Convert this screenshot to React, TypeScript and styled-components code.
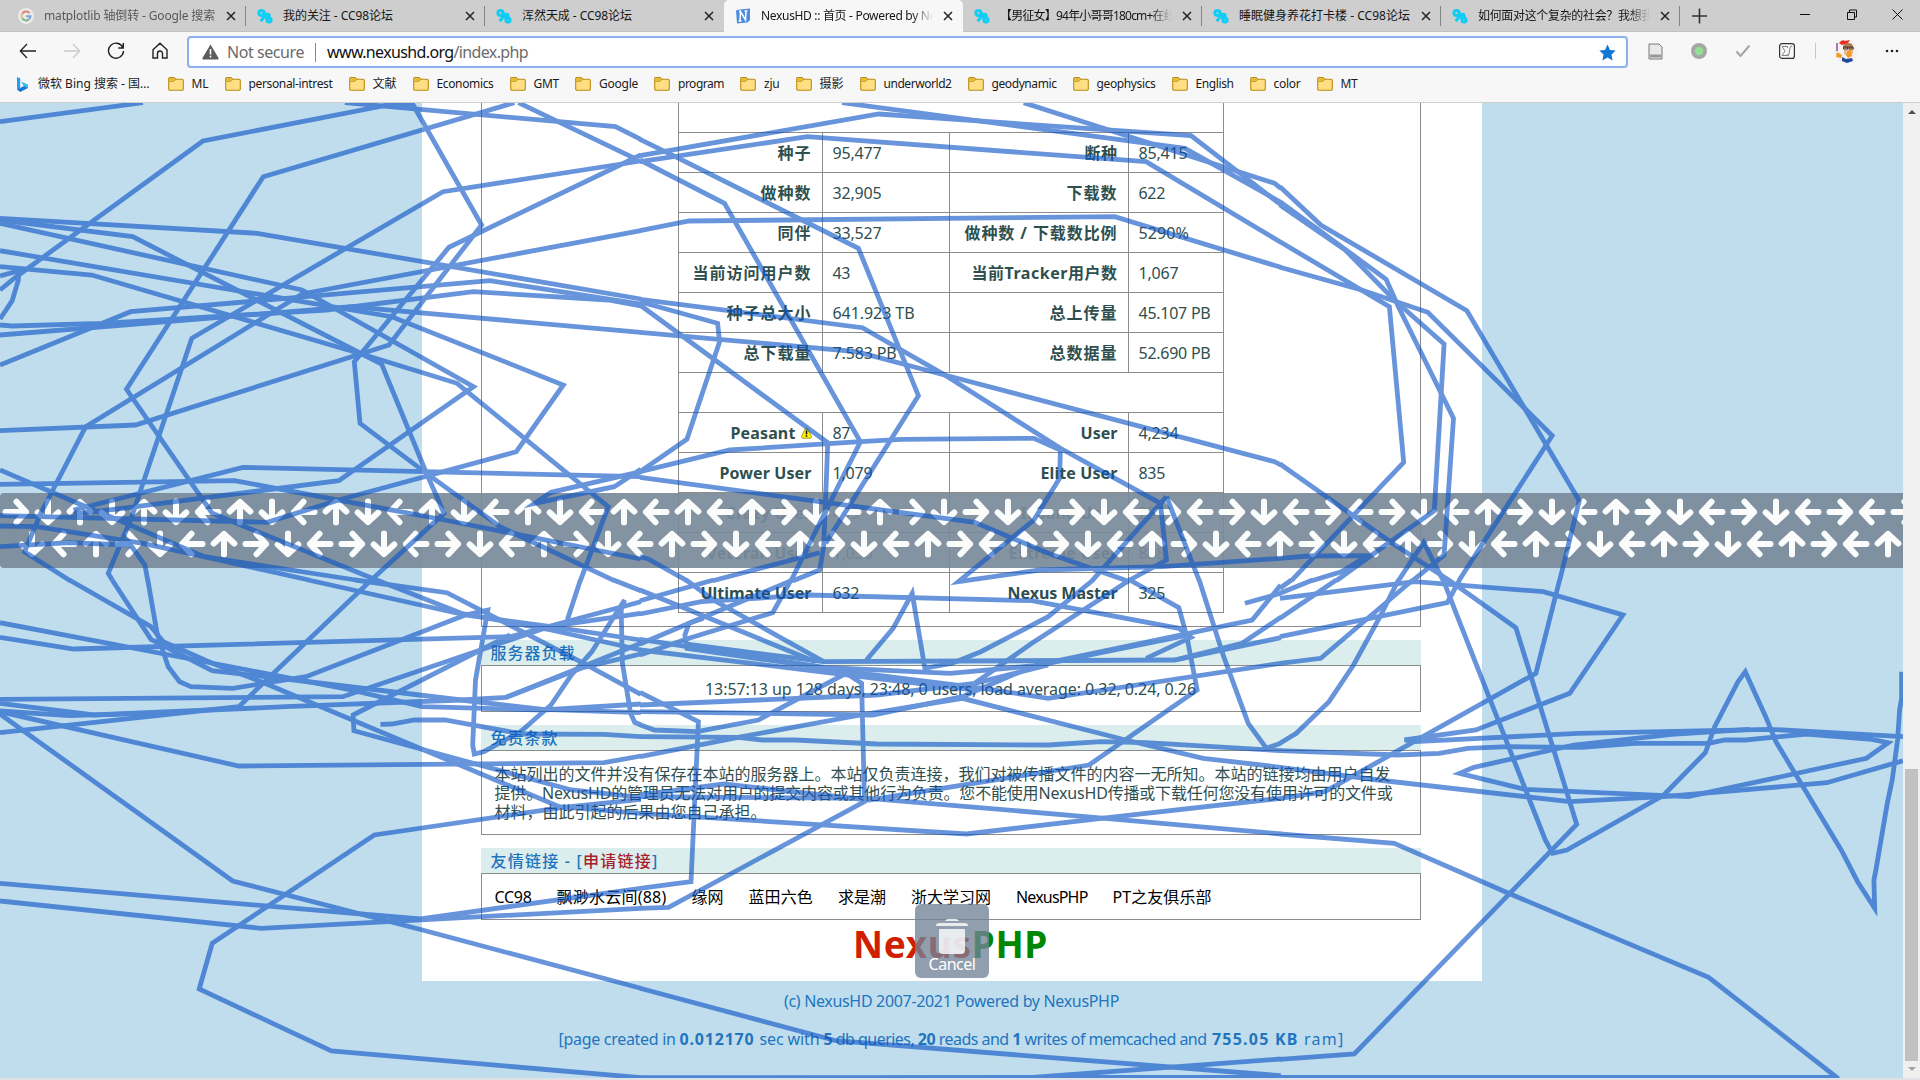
import React, { useLayoutEffect, useRef, useState } from "react";
import styled, { createGlobalStyle } from "styled-components";

const GlobalStyle = createGlobalStyle`
  * { box-sizing: border-box; }
  body { margin: 0; overflow: hidden; font-family: "Noto Sans", "Noto Sans CJK SC", sans-serif; }
`;

/* ---------- text that keeps a set width ---------- */

const Line = styled.span`
  display: inline-block;
  white-space: pre;
`;

function Fit({ w, children }: { w: number; children: React.ReactNode }) {
  const ref = useRef<HTMLSpanElement>(null);
  const [spacing, setSpacing] = useState(0);
  useLayoutEffect(() => {
    const el = ref.current;
    if (!el) return;
    const chars = (el.textContent || "").length || 1;
    setSpacing((w - el.getBoundingClientRect().width) / chars);
  }, [w]);
  return (
    <Line ref={ref} style={{ letterSpacing: `${spacing}px` }}>
      {children}
    </Line>
  );
}

/* ---------- browser chrome ---------- */

const Window = styled.div`
  position: relative;
  width: 1920px;
  height: 1080px;
  display: flex;
  flex-direction: column;
  overflow: hidden;
  background: #dfe3e7;
`;

const TabStrip = styled.div`
  height: 32px;
  flex: none;
  display: flex;
  padding-left: 7px;
  background: #cecece;
  box-shadow: inset 0 -1px 0 #c2c2c2;
`;

const Tab = styled.div<{ $active?: boolean; $line?: boolean }>`
  width: 239px;
  flex: none;
  display: flex;
  align-items: center;
  padding: 0 10px 0 11px;
  border-radius: 5px 5px 0 0;
  background: ${(p) => (p.$active ? "#f7f7f7" : "transparent")};
  background-image: ${(p) => (p.$line ? "linear-gradient(#858585, #858585)" : "none")};
  background-size: 1px 20px;
  background-position: right 6px;
  background-repeat: no-repeat;
  font-size: 12px;
  color: #151515;
`;

const TabTitle = styled.div<{ $fade?: boolean; $dim?: boolean }>`
  flex: 1;
  height: 20px;
  line-height: 20px;
  margin: 0 10px 0 10px;
  overflow: hidden;
  opacity: ${(p) => (p.$dim ? 0.65 : 1)};
  mask-image: ${(p) => (p.$fade ? "linear-gradient(90deg, #000 88%, transparent)" : "none")};
`;

const Controls = styled.div`
  flex: 1;
  display: flex;
  align-items: center;
  svg { flex: none; }
`;

const ToolRow = styled.div`
  height: 37px;
  flex: none;
  display: flex;
  align-items: center;
  padding-top: 1px;
  background: #f7f7f7;
`;

const ToolButton = styled.div<{ $w?: number }>`
  width: ${(p) => p.$w || 44}px;
  display: flex;
  justify-content: center;
  flex: none;
`;

const Address = styled.div`
  width: 1441px;
  height: 32px;
  flex: none;
  display: flex;
  align-items: center;
  margin: 2px 5px 0 0;
  padding: 0 10px 0 13px;
  border: 2px solid #8cb0ec;
  border-radius: 4px;
  background: #fff;
  font-size: 16px;
  line-height: 22px;
  color: #6b6b6b;
  b { font-weight: 400; color: #111; }
`;

const Rule = styled.i<{ $h: number; $c: string }>`
  width: 1px;
  height: ${(p) => p.$h}px;
  background: ${(p) => p.$c};
`;

const Security = styled.div`
  display: flex;
  align-items: center;
  gap: 11px;
  flex: 1;
  margin-left: 8px;
`;

const Bookmarks = styled.div`
  height: 34px;
  flex: none;
  display: flex;
  align-items: center;
  gap: 16px;
  padding: 0 0 4px 17px;
  border-bottom: 1px solid #cfcfcf;
  background: #f7f7f7;
  font-size: 12px;
  color: #1b1b1b;
`;

const Bookmark = styled.div<{ $gap?: number; $after?: number }>`
  display: flex;
  align-items: center;
  gap: ${(p) => p.$gap || 8}px;
  margin-right: ${(p) => p.$after || 0}px;
  line-height: 20px;
`;

/* ---------- web page ---------- */

const Viewport = styled.div`
  height: 975px;
  flex: none;
  display: flex;
`;

const Page = styled.div`
  width: 1903px;
  display: flex;
  flex-direction: column;
  align-items: center;
  background: #c0ddee;
  font-size: 16px;
  line-height: 20px;
  color: #2f4f4f;
`;

const Panel = styled.div`
  width: 1060px;
  height: 878px;
  flex: none;
  display: flex;
  flex-direction: column;
  padding: 0 61px 0 59px;
  background: #fff;
`;

const StatsBox = styled.div`
  border: 1px solid #8c8c8c;
  border-top: 0;
  padding: 0 0 13px 196px;
`;

const Stats = styled.div`
  width: 546px;
  border: 1px solid #8c8c8c;
  border-top: 0;
`;

const StatRow = styled.div<{ $h?: number; $top?: boolean }>`
  display: grid;
  grid-template-columns: 143px 127px 179px 95px;
  height: ${(p) => p.$h || 40}px;
  border-top: ${(p) => (p.$top === false ? "0" : "1px solid #8c8c8c")};
`;

const Label = styled.div<{ $left?: boolean }>`
  display: flex;
  align-items: center;
  justify-content: flex-end;
  gap: 5px;
  padding-right: 10px;
  border-left: ${(p) => (p.$left ? "1px solid #8c8c8c" : "0")};
  font-weight: 700;
`;

const Value = styled.div`
  display: flex;
  align-items: center;
  padding-left: 10px;
  border-left: 1px solid #8c8c8c;
`;

const Heading = styled.div`
  height: 25px;
  flex: none;
  margin-top: 13px;
  padding: 3px 0 0 10px;
  background: #dbedec;
  color: #1f74bd;
  font-weight: 500;
`;

const Box = styled.div<{ $h: number; $center?: boolean }>`
  height: ${(p) => p.$h}px;
  flex: none;
  border: 1px solid #8c8c8c;
  padding: 14px 13px 0;
  line-height: 19px;
  text-align: ${(p) => (p.$center ? "center" : "left")};
`;

const Links = styled.div`
  display: flex;
  gap: 25px;
  color: #000;
`;

const Red = styled.span`
  color: #a8202c;
`;

const Logo = styled.div`
  display: flex;
  justify-content: center;
  margin-top: -1px;
  line-height: 50px;
  font-size: 37px;
  font-weight: 700;
  color: #d01f00;
  span span { color: #008700; }
`;

const Footer = styled.div`
  display: flex;
  flex-direction: column;
  align-items: center;
  gap: 18px;
  padding-top: 10px;
  color: #2275bd;
`;

const ScrollBar = styled.div`
  width: 17px;
  display: flex;
  flex-direction: column;
  align-items: center;
  padding: 7px 0;
  background: #f0f0f0;
`;

const Thumb = styled.div`
  width: 13px;
  height: 292px;
  margin: auto 0 6px;
  background: #c1c1c1;
`;

const Arrowhead = styled.i<{ $down?: boolean }>`
  border: 4px solid transparent;
  ${(p) => (p.$down ? "border-top-color: #a3a3a3; border-bottom: 0;" : "border-bottom-color: #505050; border-top: 0;")}
`;

/* ---------- gesture overlay ---------- */

const Band = styled.div`
  position: absolute;
  left: 0;
  top: 493px;
  width: 1903px;
  height: 75px;
  overflow: hidden;
  border-radius: 4px 0 0 4px;
  padding-top: 3px;
  background: rgba(121, 138, 154, 0.92);
`;

const ArrowRow = styled.div<{ $indent: number }>`
  display: flex;
  width: 1980px;
  height: 32px;
  padding-left: ${(p) => p.$indent}px;
  svg { flex: none; }
`;

const Cancel = styled.div`
  position: absolute;
  left: 915px;
  top: 904px;
  width: 74px;
  height: 74px;
  display: flex;
  flex-direction: column;
  align-items: center;
  padding-top: 14px;
  border-radius: 6px;
  background: rgba(114, 131, 150, 0.78);
  color: #fff;
  font-size: 16px;
  line-height: 20px;
`;

const Trail = styled.svg`
  position: absolute;
  left: 0;
  top: 103px;
`;

/* ---------- icons ---------- */

const CloseX = () => (
  <svg width="10" height="10" viewBox="0 0 10 10" stroke="#222" strokeWidth="1.5">
    <path d="M1 1l8 8M9 1L1 9" />
  </svg>
);

const Folder = () => (
  <svg width="16" height="14" viewBox="0 0 16 14">
    <path d="M.7 2Q.7.6 2 .6H6l1.7 1.6H14q1.3 0 1.3 1.3V12q0 1.3-1.3 1.3H2Q.7 13.3.7 12z" fill="#ffdf82" stroke="#b98b12" strokeWidth="1.1" />
    <path d="M1.2 4.2H6L7.700 2.5" fill="none" stroke="#b98b12" />
    <path d="M1.5 1.5h4.300l1 1-1 1.2H1.5z" fill="#e6b62b" />
  </svg>
);

const Cc98 = () => (
  <svg width="16" height="16" viewBox="0 0 16 16" fill="none" stroke="#10cdf5" strokeWidth="3">
    <circle cx="4.5" cy="5" r="2.6" />
    <path d="M7 4Q8 10 3.500 13" />
    <circle cx="10.500" cy="8" r="1.7" />
    <circle cx="12" cy="12" r="2.1" />
  </svg>
);

const GoogleG = () => (
  <svg width="16" height="16" viewBox="0 0 16 16" fill="none" strokeWidth="2" opacity="0.75">
    <circle cx="8" cy="8" r="8" fill="#f4f4f4" />
    <path d="M11.5 5A4.5 4.5 0 0 0 4.2 5.7" stroke="#e5695f" />
    <path d="M4.2 5.7A4.5 4.5 0 0 0 4.2 10.3" stroke="#eec04a" />
    <path d="M4.2 10.3A4.5 4.5 0 0 0 11 11.3" stroke="#62ae76" />
    <path d="M11 11.3A4.5 4.5 0 0 0 12.5 8.2H8.2" stroke="#6394df" />
  </svg>
);

const NexusN = () => (
  <svg width="16" height="16" viewBox="0 0 16 16">
    <path d="M1 2.500L4.500 1.500 15 .5V12L12.500 14.500 2 15.500z" fill="#4b8be0" />
    <path d="M5 13L5.500 3.500 10.500 12 11 3M3.500 13h3M4 3.500h2M9.500 3h3" stroke="#fff" strokeWidth="1.5" fill="none" />
  </svg>
);

const Warning = () => (
  <svg width="11" height="12" viewBox="0 0 11 12">
    <path d="M4.300 1.500Q5.500 0 6.700 1.500L10.500 9.500Q10.500 11.300 9 11.300H2Q.5 11.300.5 9.500z" fill="#ffee00" stroke="#96911c" strokeWidth=".8" />
    <path d="M5.500 3.500v3.800M5.500 8.300v1.500" stroke="#000" strokeWidth="1.500" />
  </svg>
);

const directions: Record<string, number> = { r: 0, d: 90, l: 180, u: 270 };

const Arrow = ({ dir }: { dir: string }) => (
  <svg width="32" height="32" viewBox="0 0 32 32" fill="none" stroke="#fff" strokeOpacity="0.97" strokeWidth="6" strokeLinecap="round" strokeLinejoin="round">
    <path d="M5.5 16H26M16.5 5.7L26 16L16.5 26.3" transform={`rotate(${directions[dir]} 16 16)`} />
  </svg>
);

/* ---------- data ---------- */

const tabs = [
  { icon: <GoogleG />, title: "matplotlib 轴倒转 - Google 搜索", w: 171, dim: true, line: true },
  { icon: <Cc98 />, title: "我的关注 - CC98论坛", w: 110, line: true },
  { icon: <Cc98 />, title: "浑然天成 - CC98论坛", w: 110 },
  { icon: <NexusN />, title: "NexusHD :: 首页 - Powered by Ne", w: 175, fade: true, active: true },
  { icon: <Cc98 />, title: "【男征女】94年小哥哥180cm+在线", w: 175, fade: true, line: true },
  { icon: <Cc98 />, title: "睡眠健身养花打卡楼 - CC98论坛", w: 171, line: true },
  { icon: <Cc98 />, title: "如何面对这个复杂的社会？我想我", w: 175, fade: true, line: true },
];

const bookmarks: [string, number][] = [
  ["ML", 17], ["personal-intrest", 84], ["文献", 24], ["Economics", 57], ["GMT", 25.5], ["Google", 39],
  ["program", 46], ["zju", 15.5], ["摄影", 24], ["underworld2", 68], ["geodynamic", 65], ["geophysics", 59],
  ["English", 38], ["color", 27], ["MT", 17],
];

type Stat = [string, number, string, number, string, number, string, number];

const torrentStats: Stat[] = [
  ["种子", 34, "95,477", 49, "断种", 33, "85,415", 49],
  ["做种数", 51, "32,905", 49, "下载数", 51, "622", 26.5],
  ["同伴", 34, "33,527", 49, "做种数 / 下载数比例", 153, "5290%", 50.5],
  ["当前访问用户数", 119, "43", 17.5, "当前Tracker用户数", 146, "1,067", 40],
  ["种子总大小", 85, "641.923 TB", 82, "总上传量", 68, "45.107 PB", 72],
  ["总下载量", 68, "7.583 PB", 64, "总数据量", 68, "52.690 PB", 72],
];

const classStats: Stat[] = [
  ["Peasant", 65, "87", 17.5, "User", 37, "4,234", 40],
  ["Power User", 92, "1,079", 40, "Elite User", 77, "835", 26.5],
  ["Crazy User", 86, "499", 26.5, "Insane User", 97, "258", 26.5],
  ["Veteran User", 105, "1,036", 40, "Extreme User", 109, "838", 26.5],
  ["Ultimate User", 111, "632", 26.5, "Nexus Master", 110, "325", 26.5],
];

const links: [string, number][] = [
  ["CC98", 37], ["飘渺水云间(88)", 110], ["缘网", 32], ["蓝田六色", 64.5], ["求是潮", 48],
  ["浙大学习网", 80], ["NexusPHP", 71.5], ["PT之友俱乐部", 99],
];

const topArrows = "rdududludludludludlu" + "lulurdlurdrdlrdlrlrd" + "lrlrdlurdlurdlrdlrlr";
const bottomArrows = "dlurdlurdlrdlrdlurdl" + "urdlurdlurlurdlurdlu" + "rdlurdlurdlurdlurlu";

/* Sampled pointer positions; every sector has its own origin on the screen. */
const sectors = [
  {
    x: 0, y: 90, paths: [
      "0,95 350,38",
      "0,600 40,560 497,153 950,45 1010,40 1180,405 953,765 332,1005 0,1022",
      "1260,38 645,260 310,898 520,1270 918,1468",
      "1270,38 1555,205",
      "845,38 1508,110 1570,148",
      "1570,213 1085,305 470,745 320,1290 265,1450 275,1470",
      "1570,195 1100,472 868,815 882,1000 1045,1150 1225,1310 1505,1472",
      "0,385 630,430 1570,627",
      "0,390 325,440 935,822 1045,1150 1088,1270 905,1475",
      "0,400 740,600 1160,890 830,1172 300,1255 180,1272",
      "0,482 960,680 1380,885 1265,1085 830,1230 655,1297 0,1277",
      "0,530 225,555 880,790 1120,880 1490,1250 1422,1472",
      "0,558 45,543 45,570 30,632 0,687",
      "0,705 30,708 250,700 800,660 1160,605 1490,630 1570,648",
      "0,735 560,680 860,650 1570,727",
      "0,825 230,710 320,665 750,620 1200,572 1570,642",
      "1570,422 740,612 210,1010 100,1270 60,1385 172,1472",
      "0,1140 190,1240 300,1295 500,1400 872,1470",
      "0,1183 575,1172 1090,1290 1570,1407",
      "180,1260 595,1132 1570,1160",
      "0,1308 90,1310 350,1360 500,1400 757,1470",
      "0,1370 170,1358 320,1365 355,1425 362,1472",
      "1570,1138 1505,1190 1310,1240 1350,1207 1570,1145",
    ],
  },
  {
    x: 640, y: 90, paths: [
      "0,197 585,72 1350,137 1570,344",
      "0,215 410,140 1240,215 1570,457",
      "0,210 207,340 540,1055 370,1472",
      "0,148 95,205 535,475 682,917 455,1360",
      "495,38 1335,175 1570,337",
      "940,38 1200,140 1555,280 1570,295",
      "0,422 120,393 1163,380 1570,532",
      "0,628 545,713 740,850 1030,1075 1275,1240 1290,1410 1200,1470",
      "0,727 530,785 730,850 1555,1115 1570,1125",
      "0,635 190,700 195,755 115,1048 0,1145",
      "0,645 460,1058 450,1370 440,1440 375,1472",
      "0,1145 220,1080 540,1055 640,1048 965,1045 1030,1080 1028,1165 965,1290 780,1475 980,1440 1280,1430 1570,1405",
      "0,1162 440,1235 820,1297 1000,1390 1200,1475",
      "1290,1220 1108,1472",
      "1290,1220 1370,1472",
      "0,1400 20,1407 115,1472",
      "178,1472 440,1388",
    ],
  },
  {
    x: 1280, y: 90, paths: [
      "0,290 100,405 458,662 733,1232 685,1472",
      "0,335 260,568 290,650 425,985 402,1395 325,1472",
      "0,345 160,480 280,630 402,762 378,1262 270,1355 138,1472",
      "0,455 268,650 303,1117 28,1472",
      "0,532 200,600 362,667 667,1037 438,1472",
      "0,1122 270,1355 425,1480",
      "0,1405 70,1398 215,1397 150,1445 78,1472",
      "290,1472 352,1357 400,1472",
    ],
  },
  {
    x: 0, y: 580, paths: [
      "0,128 480,240 860,330 1035,380 1330,390 1570,372",
      "0,172 180,207 1250,170 1570,65",
      "170,0 370,140 400,185 520,250 640,305 1370,680 1570,700",
      "275,0 370,178 520,272 720,300 1150,363 1330,388 1570,398",
      "362,0 385,160 412,260 440,305 468,320 570,325 750,290 1140,105 1195,90 1165,300 1158,495 1162,522 1185,515 1275,455 1350,375 1400,285 1450,215 1530,60 1522,90 1525,250 1545,400 1555,427 1572,436",
      "905,5 640,315 585,380 0,458",
      "0,358 840,350 1345,140 1570,100",
      "0,370 230,405 700,380 1130,360 1240,352 1570,190",
      "0,393 170,407 420,398",
      "0,395 585,558 1480,548 1570,528",
      "0,402 570,903 1035,1050 1570,1225",
      "0,910 1030,1017 1570,925",
      "0,963 640,1045 1570,985",
      "1570,658 1380,682 917,765 520,1090 488,1227 812,1413 1570,1493",
      "932,433 960,432 1015,420 1090,420 1280,462 1480,463 1570,470",
      "755,0 1140,105 1350,140 1570,180",
      "870,0 1095,38 1430,250 1570,343",
      "918,-2 1130,100 1350,150 1570,210",
      "1422,0 1390,120",
      "1250,165 865,405 867,452 1130,540 1400,630 1570,652",
      "1503,0 1570,32",
      "1570,222 1430,262 1240,352",
    ],
  },
  {
    x: 640, y: 580, paths: [
      "0,30 110,85 430,245",
      "113,0 180,60 450,245 1310,240 1570,173",
      "0,102 150,65 410,45 960,62 1320,145 1350,172 1240,235",
      "820,310 580,345 0,375",
      "0,62 180,0",
      "0,192 155,112 375,0",
      "0,225 120,175 325,98 370,0",
      "555,240 620,145 667,40 698,265 765,250 835,215 1000,110 1110,0",
      "820,310 960,190 1200,0 1320,83 1340,170 1365,330 1100,555 560,660 205,612 0,645",
      "155,115 120,130 110,165 115,205 510,275 840,325 1000,355 1570,250",
      "0,178 450,262 760,280 960,258 1500,120 1570,15",
      "0,210 510,285 820,330",
      "110,192 450,245",
      "0,395 570,405 790,350 960,260 1345,165",
      "820,310 1000,255",
      "0,530 250,470 540,405 790,355 1190,480 1380,535 1570,562",
      "0,337 143,425 125,905 0,925",
      "0,985 70,982 550,665 543,310 505,280 290,420 140,455 35,450 0,434",
      "0,470 240,472 300,480 380,480 580,492 1000,495 1130,485 1240,488 1570,512",
      "0,650 560,655 1140,715 1570,762",
      "0,700 800,762 1130,715 1570,655",
      "0,1225 480,1382 1570,1487",
      "1370,0 1430,230 1490,430 1535,505 1570,490",
      "1482,70 1570,40",
      "1570,112 1475,190 1310,240",
      "1570,1437 1260,1465 945,1494",
      "0,1493 1570,1492",
    ],
  },
  {
    x: 1280, y: 580, paths: [
      "0,55 330,5 645,35 840,105 710,340 480,450 305,480 330,485 730,460 1200,448 1526,470",
      "0,25 28,0",
      "0,40 80,0",
      "0,170 410,68 440,0",
      "0,250 100,235 325,0",
      "0,115 138,0",
      "0,490 40,460 120,365 180,255 245,110 290,0",
      "400,0 430,95 650,780 668,820 703,810 940,645 1042,518 1065,440 1122,305 1140,275 1160,330 1190,410 1215,485 1375,810 1415,905 1457,985 1455,900 1460,870 1478,740 1488,670 1500,600 1513,480 1518,390 1523,355 1523,275",
      "0,512 290,525 390,520 460,505 560,500 740,502 870,490 1050,490 1090,480 1140,480 1290,462 1450,478 1490,488 1437,535 1000,650 600,628 440,580 475,562 720,495 960,463 1150,448",
      "0,562 240,600 710,665 940,650 1340,608 1526,542",
      "0,655 110,635 350,470 627,280 685,0",
      "0,762 280,790 560,940 1050,1192 1368,1496",
      "0,1438 182,1422 727,733 578,143 425,10",
      "0,1492 1360,1492",
    ],
  },
];

const toScreen = (path: string, x: number, y: number) =>
  path
    .split(" ")
    .map((pair) => {
      const [px, py] = pair.split(",").map(Number);
      return `${(x + px / 2.45).toFixed(1)},${(y + py / 3).toFixed(1)}`;
    })
    .join(" ");

/* ---------- parts ---------- */

const StatLine = ({ stat }: { stat: Stat }) => (
  <StatRow>
    <Label>
      <Fit w={stat[1]}>{stat[0]}</Fit>
      {stat[0] === "Peasant" && <Warning />}
    </Label>
    <Value><Fit w={stat[3]}>{stat[2]}</Fit></Value>
    <Label $left><Fit w={stat[5]}>{stat[4]}</Fit></Label>
    <Value><Fit w={stat[7]}>{stat[6]}</Fit></Value>
  </StatRow>
);

const Chrome = () => (
  <>
    <TabStrip>
      {tabs.map((t) => (
        <Tab key={t.title} $active={t.active} $line={t.line}>
          {t.icon}
          <TabTitle $fade={t.fade} $dim={t.dim}><Fit w={t.w}>{t.title}</Fit></TabTitle>
          <CloseX />
        </Tab>
      ))}
      <Controls>
        <svg width="239" height="32" viewBox="0 0 239 32" fill="none" stroke="#111">
          <path d="M12 16h15M19.5 8.5v15" strokeWidth="1.6" stroke="#333" />
          <path d="M120 14.5h10M167.5 12.5h7v7h-7zM169.5 12.5v-2.5h7v7h-2M212.500 9.500l10 10M222.500 9.500l-10 10" />
        </svg>
      </Controls>
    </TabStrip>
    <ToolRow>
      <ToolButton $w={56}>
        <svg width="18" height="16" viewBox="0 0 18 16" fill="none" stroke="#222" strokeWidth="1.3"><path d="M17 8H1.5M8 1L1.3 8 8 15" /></svg>
      </ToolButton>
      <ToolButton $w={32}>
        <svg width="18" height="16" viewBox="0 0 18 16" fill="none" stroke="#ccc" strokeWidth="1.3"><path d="M1 8h15.5M10 1l6.7 7L10 15" /></svg>
      </ToolButton>
      <ToolButton $w={56}>
        <svg width="18" height="18" viewBox="0 0 18 18" fill="none" stroke="#222" strokeWidth="1.4"><path d="M15.8 5.5A7.5 7.5 0 1 0 16.5 9M16.3 1v5h-5" /></svg>
      </ToolButton>
      <ToolButton $w={32}>
        <svg width="16" height="18" viewBox="0 0 16 18" fill="none" stroke="#222" strokeWidth="1.4"><path d="M1 7.8L8 1.2l7 6.6V16h-4.5v-4.5a2.5 2.5 0 0 0-5 0V16H1z" /></svg>
      </ToolButton>
      <ToolButton $w={11} />
      <Address>
        <svg width="17" height="16" viewBox="0 0 17 16"><path d="M8.5.5L16.5 14Q17 15.5 15.5 15.5H1.5Q0 15.5.5 14z" fill="#5c5c5c" /><path d="M8.5 5v5.5M8.5 11.8v1.7" stroke="#fff" strokeWidth="1.6" /></svg>
        <Security>
          <Fit w={77}>Not secure</Fit>
          <Rule $h={19} $c="#8a8a8a" />
          <Fit w={201}><b>www.nexushd.org</b>/index.php</Fit>
        </Security>
        <svg width="17" height="17" viewBox="0 0 17 17"><path d="M8.5.5l2.5 5.4 5.7.7-4.2 4 1.1 5.9-5.1-2.9-5.1 2.9 1.1-5.9-4.2-4 5.7-.7z" fill="#0f78d4" /></svg>
      </Address>
      <ToolButton>
        <svg width="15" height="17" viewBox="0 0 15 17"><path d="M1 1h10l3 3v12H1z" fill="#e9e9e9" stroke="#777" /><path d="M2 11.5h11v3H2z" fill="#999" /></svg>
      </ToolButton>
      <ToolButton>
        <svg width="16" height="16" viewBox="0 0 16 16"><circle cx="8" cy="8" r="8" fill="#a6a6a6" /><circle cx="8" cy="8" r="4.3" fill="#93df93" /></svg>
      </ToolButton>
      <ToolButton>
        <svg width="16" height="14" viewBox="0 0 16 14" fill="none" stroke="#a5a5a5" strokeWidth="2"><path d="M1.5 7.5l4 4.5L14.5 1.5" /></svg>
      </ToolButton>
      <ToolButton>
        <svg width="16" height="16" viewBox="0 0 16 16" fill="none" stroke="#333"><rect x=".6" y=".6" width="14.8" height="14.8" rx="2.5" strokeWidth="1.2" /><path d="M8.5 5V3.5H3L6 8l-3 4.500h5.5V11M13 3q-1.8-.3-2 2L10 11q-.2 2-1.5 2" strokeWidth=".9" stroke="#777" /></svg>
      </ToolButton>
      <ToolButton $w={13}><Rule $h={16} $c="#c8c8c8" /></ToolButton>
      <ToolButton $w={48}>
        <svg width="24" height="24" viewBox="0 0 24 24">
          <circle cx="12" cy="12" r="11.5" fill="#f6f1ec" />
          <path d="M9 7q3-5 9-2l2 5-3 3-6-1z" fill="#a97a5c" />
          <path d="M5 4q3-4 6-2l5-1-2 3-6 2z" fill="#ee2b20" />
          <path d="M10 9h9v5l-4 4-5-3z" fill="#e7b899" />
          <path d="M9.5 8h4v2h-4zM15 8h4v2h-4z" fill="none" stroke="#44342d" />
          <path d="M14 12l3-1 1 6-4 2-2-3zM3 13l5 3-1 3-5-1z" fill="#f39a22" />
          <path d="M8 18l4 2 6-1 1 3-6 2-5-2z" fill="#24499b" />
          <path d="M3 4v8" stroke="#a678b3" strokeWidth="2" />
        </svg>
      </ToolButton>
      <ToolButton>
        <svg width="14" height="4" viewBox="0 0 14 4" fill="#222"><circle cx="2" cy="2" r="1.3" /><circle cx="7" cy="2" r="1.3" /><circle cx="12" cy="2" r="1.3" /></svg>
      </ToolButton>
    </ToolRow>
    <Bookmarks>
      <Bookmark $gap={9} $after={2}>
        <svg width="12" height="16" viewBox="0 0 12 16"><path d="M0 1l3.2 1.2V12L0 14z" fill="#2b9df0" /><path d="M0 13.5L7 10 4.500 6l6.500 2.8V12L3.2 16z" fill="#1976d8" /><path d="M4.500 6L11 8.8V12L7 10z" fill="#35c4ef" /></svg>
        <Fit w={111.5}>微软 Bing 搜索 - 国…</Fit>
      </Bookmark>
      {bookmarks.map(([name, w]) => (
        <Bookmark key={name}><Folder /><Fit w={w}>{name}</Fit></Bookmark>
      ))}
    </Bookmarks>
  </>
);

export default function App() {
  return (
    <Window>
      <GlobalStyle />
      <Chrome />
      <Viewport>
        <Page>
          <Panel>
            <StatsBox>
              <Stats>
                <StatRow $h={29} $top={false} />
                {torrentStats.map((s) => <StatLine key={s[0]} stat={s} />)}
                <StatRow />
                {classStats.map((s) => <StatLine key={s[0]} stat={s} />)}
              </Stats>
            </StatsBox>
            <Heading><Fit w={85}>服务器负载</Fit></Heading>
            <Box $h={47} $center><Fit w={491}>13:57:13 up 128 days, 23:48, 0 users, load average: 0.32, 0.24, 0.26</Fit></Box>
            <Heading><Fit w={68}>免责条款</Fit></Heading>
            <Box $h={85}>
              <Fit w={896}>本站列出的文件并没有保存在本站的服务器上。本站仅负责连接，我们对被传播文件的内容一无所知。本站的链接均由用户自发</Fit>
              <Fit w={898}>提供。NexusHD的管理员无法对用户的提交内容或其他行为负责。您不能使用NexusHD传播或下载任何您没有使用许可的文件或</Fit>
              <Fit w={272}>材料，由此引起的后果由您自己承担。</Fit>
            </Box>
            <Heading><Fit w={168}>友情链接 - [<Red>申请链接</Red>]</Fit></Heading>
            <Box $h={47}>
              <Links>{links.map(([name, w]) => <Fit key={name} w={w}>{name}</Fit>)}</Links>
            </Box>
            <Logo><Fit w={195}>Nexus<span>PHP</span></Fit></Logo>
          </Panel>
          <Footer>
            <Fit w={335}>(c) NexusHD 2007-2021 Powered by NexusPHP</Fit>
            <Line>
              <Fit w={121}>[page created in </Fit>
              <Fit w={80}><b>0.012170</b> </Fit>
              <Fit w={64}>sec with </Fit>
              <Fit w={786 - 121 - 80 - 64 - 138}><b>5</b> db queries, <b>20</b> reads and <b>1</b> writes of memcached and</Fit>
              <Fit w={138}> <b>755.05 KB</b> ram]</Fit>
            </Line>
          </Footer>
        </Page>
        <ScrollBar>
          <Arrowhead />
          <Thumb />
          <Arrowhead $down />
        </ScrollBar>
      </Viewport>
      <Band>
        <ArrowRow $indent={0}>{topArrows.split("").map((d, i) => <Arrow key={i} dir={d} />)}</ArrowRow>
        <ArrowRow $indent={16}>{bottomArrows.split("").map((d, i) => <Arrow key={i} dir={d} />)}</ArrowRow>
      </Band>
      <Cancel>
        <svg width="32" height="36" viewBox="0 0 32 36" fill="#fff" fillOpacity="0.8">
          <path d="M9 3q1-2 3-2h8q2 0 3 2zM0 8q0-3 3-3h26q3 0 3 3zM3 11h26v21q0 4-4 4H7q-4 0-4-4z" />
        </svg>
        <Fit w={47}>Cancel</Fit>
      </Cancel>
      <Trail width="1903" height="975" viewBox="0 103 1903 975">
        <g opacity="0.62" fill="none" stroke="#0b54c6" strokeWidth="4.8" strokeMiterlimit="6">
          {sectors.map((s) => s.paths.map((p) => <polyline key={`${s.x}-${s.y}-${p}`} points={toScreen(p, s.x, s.y)} />))}
        </g>
      </Trail>
    </Window>
  );
}
